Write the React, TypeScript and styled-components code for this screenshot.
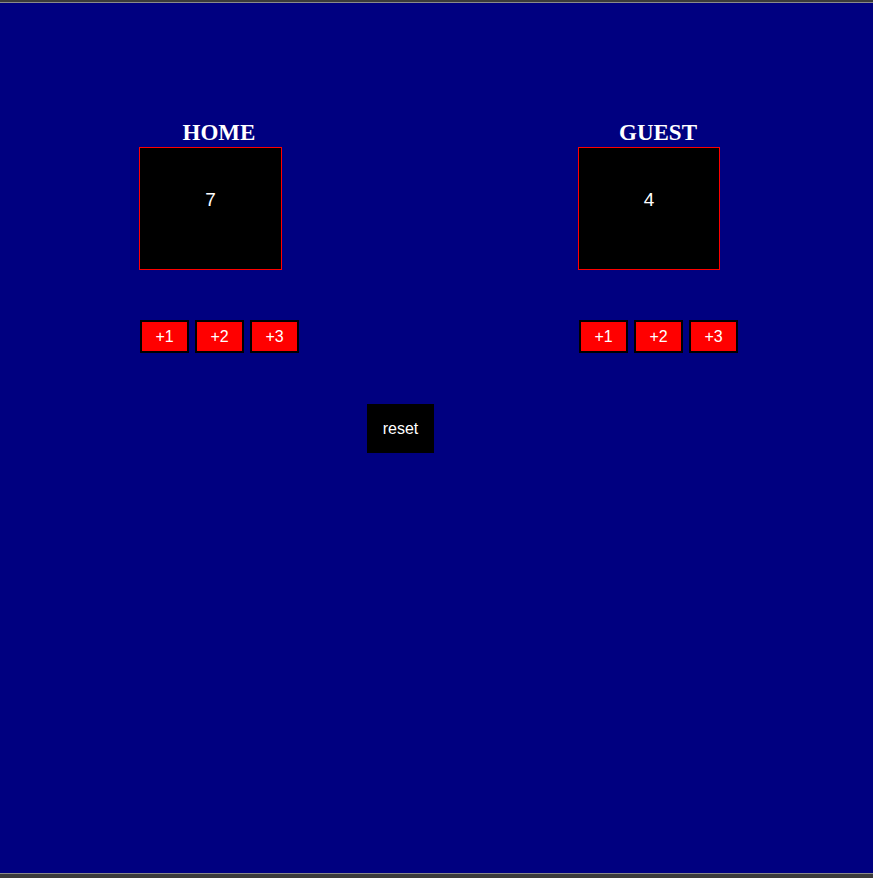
import React, { useState } from "react";
import styled, { createGlobalStyle } from "styled-components";

const Global = createGlobalStyle`
  html, body { margin: 0; padding: 0; background: #3b3b3b; }
  body { font-family: "Liberation Sans", Arial, sans-serif; }
`;

const Frame = styled.div`
  box-sizing: border-box;
  height: 878px;
  padding: 2px 0 4px;
  background: #3b3b3b;
`;

const Screen = styled.div`
  box-sizing: border-box;
  height: 100%;
  background: #000080;
  border-top: 1px solid #8a8a8a;
  border-bottom: 1px solid #8a8a8a;
  padding-top: 116px;
`;

const Board = styled.div`
  display: flex;
  gap: 279px;
  padding-left: 139px;
`;

const Team = styled.section`
  display: flex;
  flex-direction: column;
  width: 160px;
`;

const TeamName = styled.h2`
  margin: 0;
  height: 28px;
  line-height: 28px;
  text-align: center;
  font-family: "Liberation Serif", "Times New Roman", serif;
  font-size: 23px;
  font-weight: bold;
  color: #ffffff;
`;

const ScoreBox = styled.div<{ $wide: number }>`
  box-sizing: border-box;
  width: ${(p) => p.$wide}px;
  height: 123px;
  border: 1px solid #ff0000;
  background: #000000;
  color: #ffffff;
  font-size: 19px;
  text-align: center;
  padding-top: 40px;
  line-height: 23px;
`;

const ButtonRow = styled.div`
  display: flex;
  gap: 6px;
  margin: 50px 0 0 1px;
`;

const AddButton = styled.button`
  box-sizing: border-box;
  width: 49px;
  height: 33px;
  padding: 0;
  border: 2px solid #000000;
  background: #ff0000;
  color: #ffffff;
  font-family: "Liberation Sans", Arial, sans-serif;
  font-size: 16px;
  cursor: pointer;
`;

const ResetRow = styled.div`
  display: flex;
  padding-left: 367px;
  margin-top: 51px;
`;

const ResetButton = styled.button`
  width: 67px;
  height: 49px;
  padding: 0;
  border: none;
  background: #000000;
  color: #ffffff;
  font-family: "Liberation Sans", Arial, sans-serif;
  font-size: 16px;
  cursor: pointer;
`;

function TeamPanel({
  name,
  score,
  boxWidth,
  onAdd,
}: {
  name: string;
  score: number;
  boxWidth: number;
  onAdd: (n: number) => void;
}) {
  return (
    <Team>
      <TeamName>{name}</TeamName>
      <ScoreBox $wide={boxWidth}>{score}</ScoreBox>
      <ButtonRow>
        {[1, 2, 3].map((n) => (
          <AddButton key={n} onClick={() => onAdd(n)}>
            +{n}
          </AddButton>
        ))}
      </ButtonRow>
    </Team>
  );
}

export default function App() {
  const [home, setHome] = useState(7);
  const [guest, setGuest] = useState(4);
  return (
    <>
      <Global />
      <Frame>
        <Screen>
          <Board>
            <TeamPanel name="HOME" score={home} boxWidth={143} onAdd={(n) => setHome(home + n)} />
            <TeamPanel name="GUEST" score={guest} boxWidth={142} onAdd={(n) => setGuest(guest + n)} />
          </Board>
          <ResetRow>
            <ResetButton
              onClick={() => {
                setHome(0);
                setGuest(0);
              }}
            >
              reset
            </ResetButton>
          </ResetRow>
        </Screen>
      </Frame>
    </>
  );
}
